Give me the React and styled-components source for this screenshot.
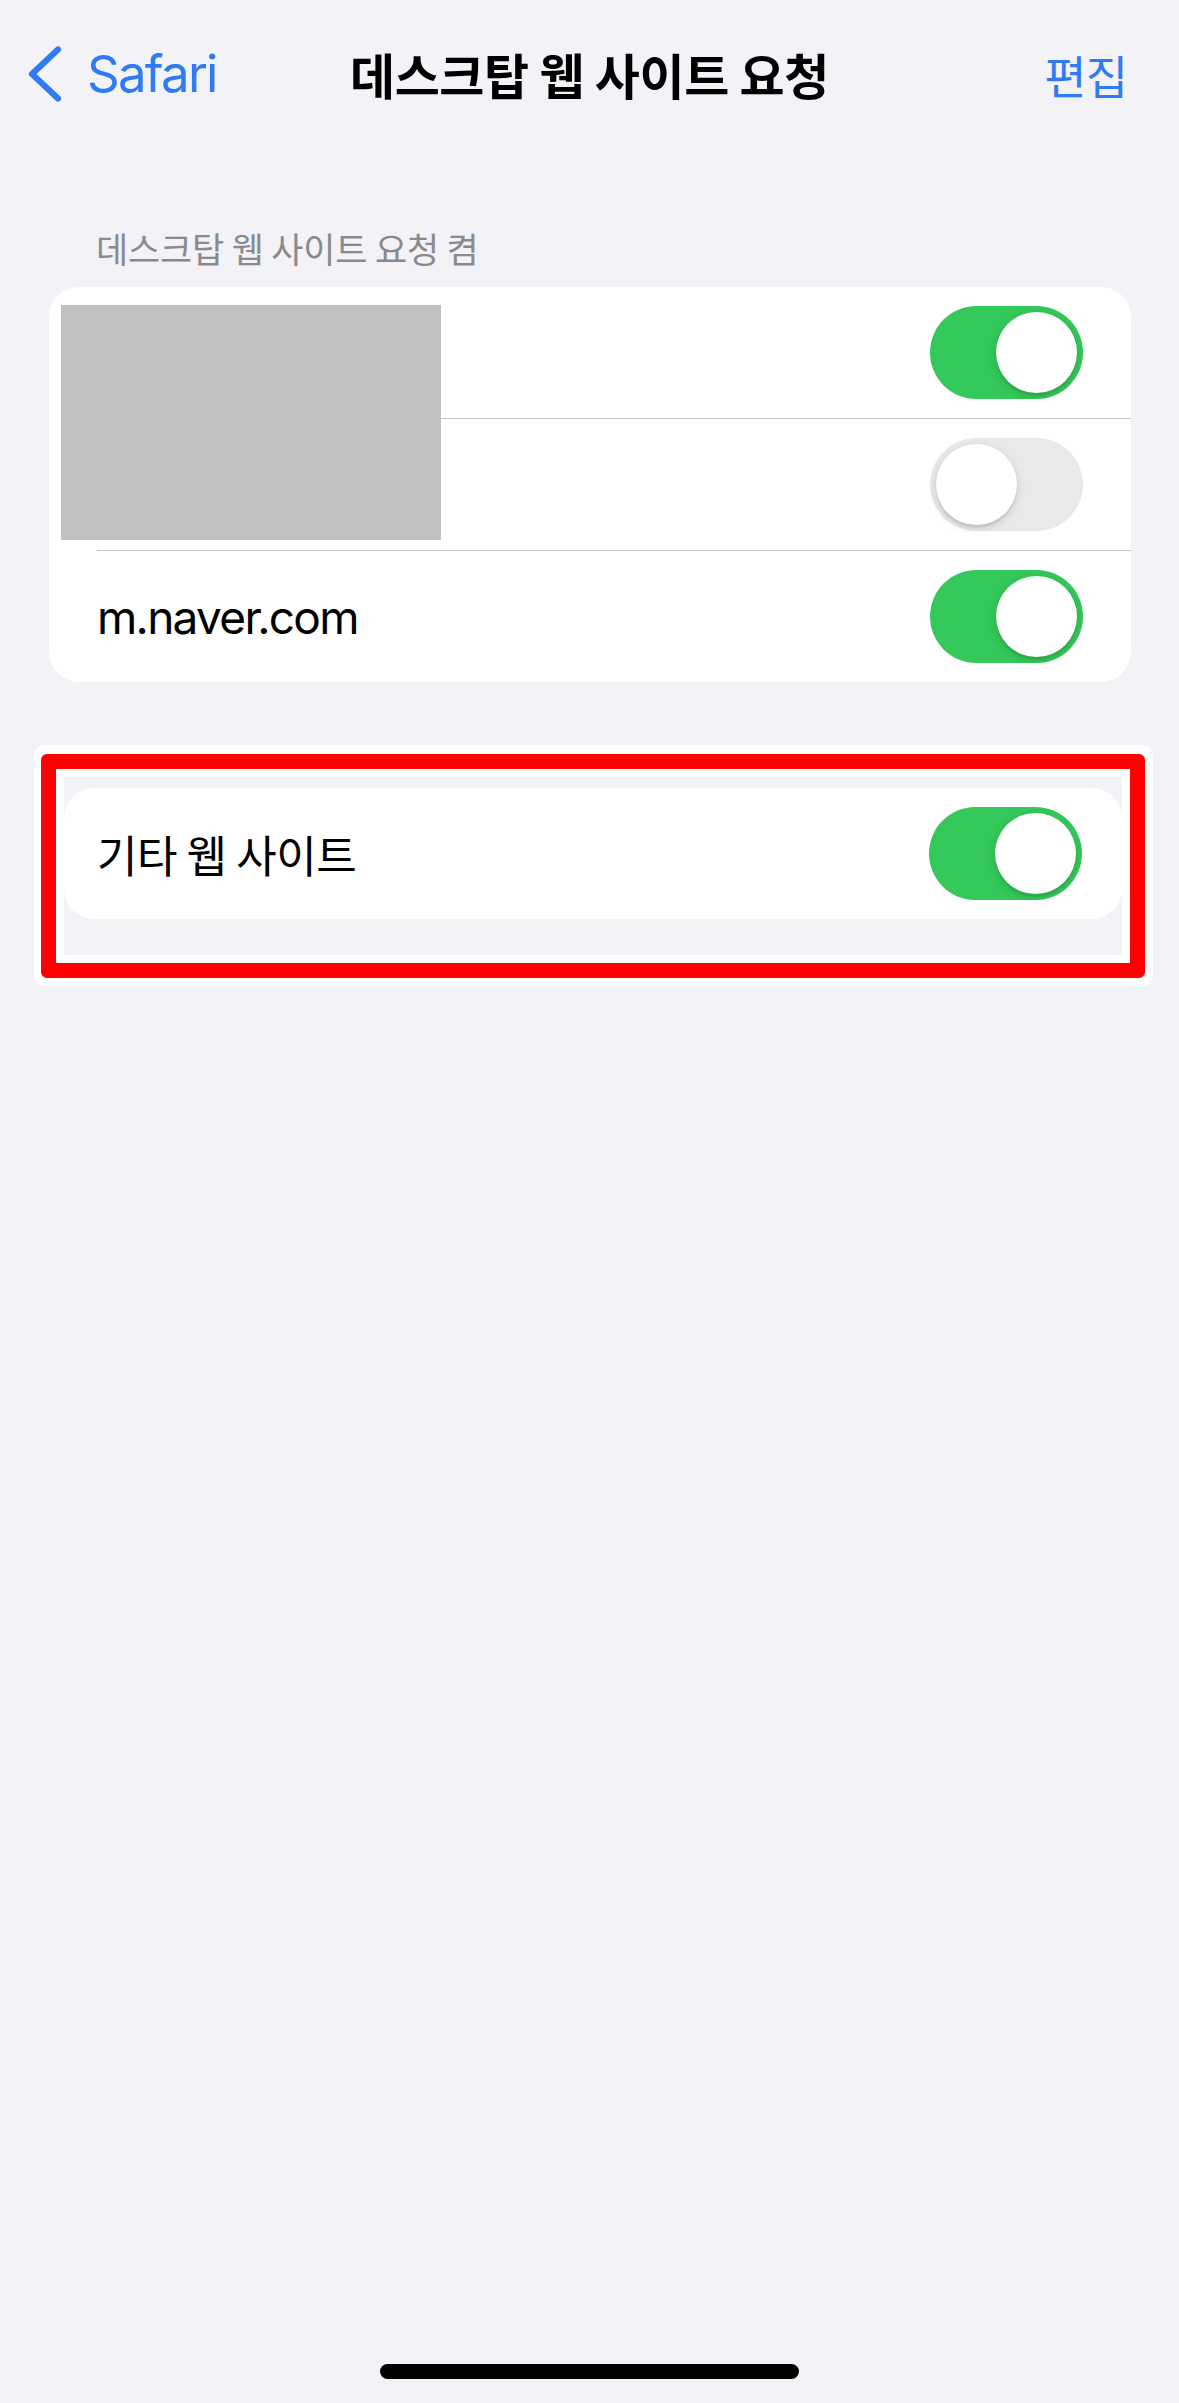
import React from "react";
import styled, { createGlobalStyle } from "styled-components";

const GlobalStyle = createGlobalStyle`
  html, body {
    margin: 0;
    padding: 0;
    background: #f2f2f7;
  }
  body {
    font-family: Inter, "Noto Sans CJK KR", "Noto Sans", sans-serif;
    -webkit-font-smoothing: antialiased;
  }
`;

const Page = styled.div`
  min-height: 2403px;
  display: flex;
  flex-direction: column;
  background: #f2f2f7;
  color: #000;
`;

const NavBar = styled.header`
  height: 147px;
  display: grid;
  grid-template-columns: 1fr auto 1fr;
  align-items: center;
`;

const BackButton = styled.div`
  justify-self: start;
  display: flex;
  align-items: center;
  gap: 25px;
  padding-left: 28px;
  color: #2f7bf5;
`;

const BackLabel = styled.span`
  font-family: Inter, "Noto Sans", sans-serif;
  font-size: 51px;
  letter-spacing: -1.8px;
  line-height: 1;
`;

const Title = styled.h1`
  margin: 0;
  font-family: "Noto Sans CJK KR", sans-serif;
  font-weight: 700;
  font-size: 49px;
  letter-spacing: -0.4px;
  line-height: 1;
`;

const EditButton = styled.span`
  justify-self: end;
  padding-right: 52px;
  color: #2f7bf5;
  font-family: "Noto Sans CJK KR", sans-serif;
  font-size: 46px;
  letter-spacing: -1px;
  line-height: 1;
`;

const SectionHeader = styled.div`
  margin-top: 81px;
  height: 40px;
  line-height: 40px;
  padding-left: 96px;
  font-family: "Noto Sans CJK KR", sans-serif;
  font-size: 35px;
  letter-spacing: -0.2px;
  color: #8a8a8e;
`;

const Card = styled.section`
  position: relative;
  margin: 19px 48px 0 49px;
  background: #fff;
  border-radius: 30px;
  overflow: hidden;
`;

const Row = styled.div`
  padding-left: 48px;
`;

const RowInner = styled.div`
  height: 131px;
  display: flex;
  align-items: center;
  justify-content: space-between;
  padding-right: 48px;
  border-bottom: ${(p) => (p.$last ? "none" : "1px solid #c6c6c8")};
`;

const RowLabel = styled.span`
  font-family: Inter, "Noto Sans CJK KR", sans-serif;
  font-size: 46px;
  letter-spacing: -1.7px;
  line-height: 1;
`;

const KoLabel = styled.span`
  font-family: "Noto Sans CJK KR", sans-serif;
  font-size: 44px;
  letter-spacing: -0.4px;
  line-height: 1;
`;

const Redaction = styled.div`
  position: absolute;
  left: 12px;
  top: 18px;
  width: 380px;
  height: 235px;
  background: #c1c1c1;
`;

const Track = styled.div`
  box-sizing: border-box;
  width: 153px;
  height: 93px;
  padding: 6px;
  border-radius: 47px;
  display: flex;
  align-items: center;
  justify-content: ${(p) => (p.$on ? "flex-end" : "flex-start")};
  background: ${(p) => (p.$on ? "#34c759" : "#e9e9eb")};
  flex-shrink: 0;
`;

const Knob = styled.div`
  width: 81px;
  height: 81px;
  border-radius: 50%;
  background: #fff;
  box-shadow: 0 3px 8px rgba(0, 0, 0, 0.15), 0 3px 1px rgba(0, 0, 0, 0.06);
`;

const Toggle = ({ on }) => (
  <Track $on={on}>
    <Knob />
  </Track>
);

const Frame = styled.div`
  margin: 63px 26px 0 34px;
  padding: 9px 8px 8px 7px;
  background: #fff;
  border-radius: 10px;
`;

const RedBox = styled.div`
  border: 15px solid #ff0000;
  border-radius: 6px;
  background: #fff;
  padding: 8px;
`;

const GreyPanel = styled.div`
  background: #f2f2f7;
  padding: 11px 0 36px;
`;

const InsetCard = styled.div`
  height: 131px;
  background: #fff;
  border-radius: 30px;
  display: flex;
  align-items: center;
  justify-content: space-between;
  padding: 0 40px 0 33px;
`;

const HomeIndicator = styled.div`
  margin-top: auto;
  margin-bottom: 24px;
  align-self: center;
  width: 419px;
  height: 15px;
  border-radius: 8px;
  background: #000;
`;

const Chevron = () => (
  <svg width="34" height="56" viewBox="0 0 34 56" fill="none">
    <path
      d="M30 3.5 L4 28 L30 52.5"
      stroke="#2f7bf5"
      strokeWidth="6.2"
      strokeLinecap="round"
      strokeLinejoin="round"
    />
  </svg>
);

export default function App() {
  return (
    <Page>
      <GlobalStyle />
      <NavBar>
        <BackButton>
          <Chevron />
          <BackLabel>Safari</BackLabel>
        </BackButton>
        <Title>데스크탑 웹 사이트 요청</Title>
        <EditButton>편집</EditButton>
      </NavBar>

      <SectionHeader>데스크탑 웹 사이트 요청 켬</SectionHeader>
      <Card>
        <Row>
          <RowInner>
            <RowLabel />
            <Toggle on />
          </RowInner>
        </Row>
        <Row>
          <RowInner>
            <RowLabel />
            <Toggle on={false} />
          </RowInner>
        </Row>
        <Row>
          <RowInner $last>
            <RowLabel>m.naver.com</RowLabel>
            <Toggle on />
          </RowInner>
        </Row>
        <Redaction />
      </Card>

      <Frame>
        <RedBox>
          <GreyPanel>
            <InsetCard>
              <KoLabel>기타 웹 사이트</KoLabel>
              <Toggle on />
            </InsetCard>
          </GreyPanel>
        </RedBox>
      </Frame>

      <HomeIndicator />
    </Page>
  );
}
